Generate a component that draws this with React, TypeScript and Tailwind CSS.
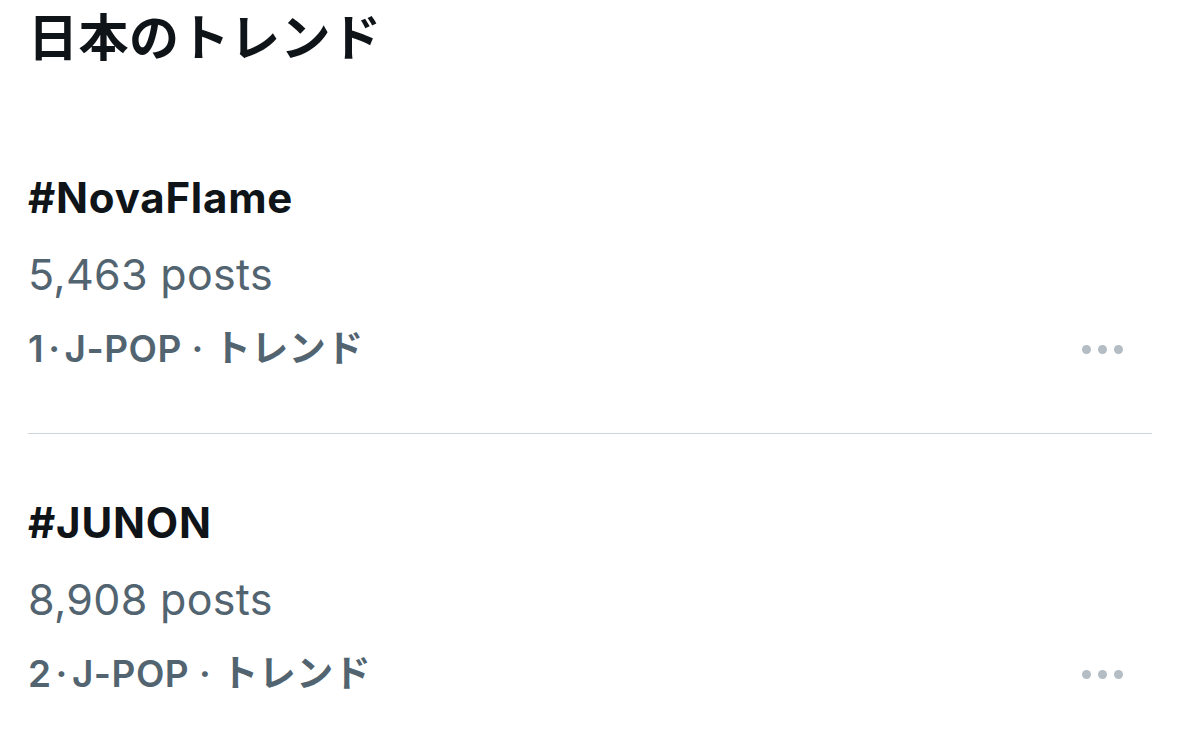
const font = { fontFamily: 'Inter, "Noto Sans CJK JP", sans-serif' }

type Trend = { rank: number; tag: string; posts: string }

const trends: Trend[] = [
  { rank: 1, tag: '#NovaFlame', posts: '5,463 posts' },
  { rank: 2, tag: '#JUNON', posts: '8,908 posts' },
]

const MoreDots = () => (
  <div className="flex items-center gap-[7px] mr-[29px]">
    <span className="w-[9px] h-[9px] rounded-full bg-[#b4bcc4]" />
    <span className="w-[9px] h-[9px] rounded-full bg-[#b4bcc4]" />
    <span className="w-[9px] h-[9px] rounded-full bg-[#b4bcc4]" />
  </div>
)

const App = () => {
  return (
    <div className="w-[1179px] h-[740px] bg-white overflow-hidden" style={font}>
      <div className="pl-[28px] pr-[27px]">
        <h1 className="h-[76px] leading-[76px] text-[50px] font-bold text-[#0f1419] tracking-[0.5px]">
          日本のトレンド
        </h1>

        {trends.map((t, i) => (
          <div
            key={t.rank}
            className={
              i === 0
                ? 'pt-[84px] pb-[47px] border-b border-[#cfd4d8]'
                : 'pt-[51px]'
            }
          >
            <p className="h-[76px] leading-[76px] text-[42px] font-bold text-[#0f1419] tracking-[0.8px]">
              {t.tag}
            </p>
            <p className="h-[76px] leading-[76px] text-[43px] text-[#536471] tracking-[0.3px]">
              {t.posts}
            </p>
            <div className="h-[74px] flex items-center justify-between">
              <p className="text-[37px] font-semibold text-[#536471] tracking-[0.5px]">
                {t.rank}
                <span className="mx-[4px]">·</span>J-POP · トレンド
              </p>
              <MoreDots />
            </div>
          </div>
        ))}
      </div>
    </div>
  )
}

export default App
